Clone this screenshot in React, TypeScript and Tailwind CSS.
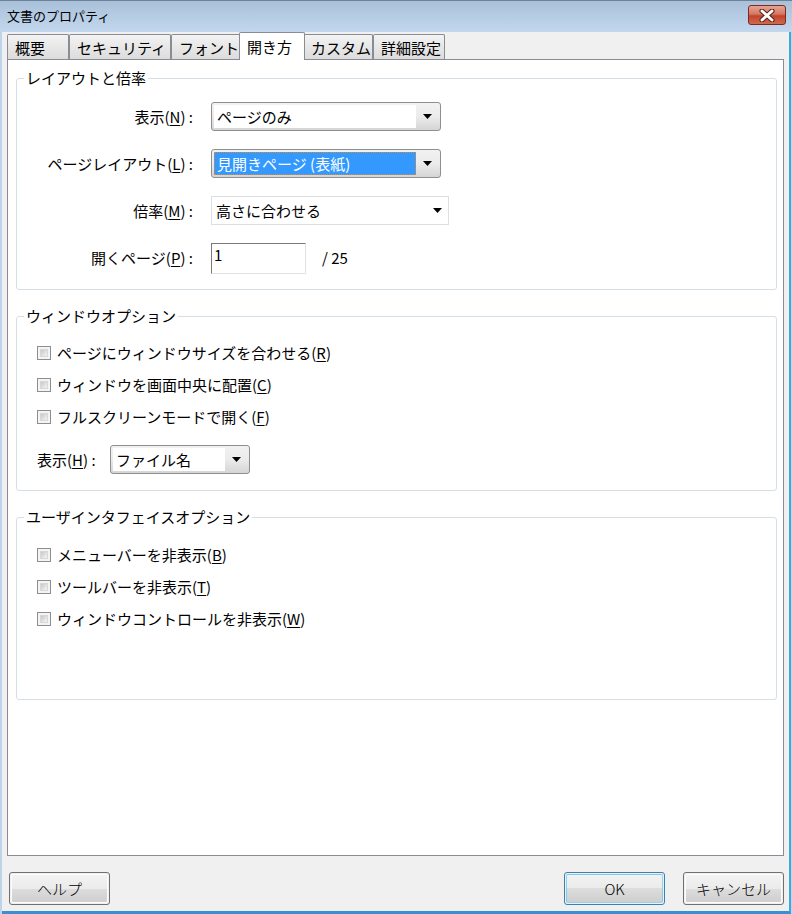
import React from "react";

type TabProps = { label: string; width: string; selected?: boolean };

const Tab = ({ label, width, selected }: TabProps) => {
  if (selected) {
    return (
      <div
        className={`${width} h-[28px] -mb-px -mx-[2px] z-10 flex items-center pl-[7px] bg-white border border-b-0 border-[#898c95] rounded-t-[2px] text-[15px] text-black`}>
        {label}
      </div>
    );
  }
  return (
    <div
      className={`${width} h-[25px] flex items-center pl-[7px] pt-[2px] bg-gradient-to-b from-[#f3f3f3] to-[#dcdcdc] border border-b-0 border-[#898c95] rounded-t-[2px] text-[15px] text-black`}>
      {label}
    </div>
  );
};

const U = ({ c }: { c: string }) => <span className="underline underline-offset-[2px]">{c}</span>;

const Arrow = () => (
  <svg width="9" height="5" viewBox="0 0 9 5">
    <path d="M0 0 H9 L4.5 5 Z" fill="#000" />
  </svg>
);

type ComboProps = {
  value: string;
  width: string;
  variant?: "normal" | "selected" | "flat";
  height?: string;
};

const Combo = ({ value, width, variant = "normal", height = "h-[29px]" }: ComboProps) => {
  if (variant === "flat") {
    return (
      <div
        className={`${width} ${height} flex items-center justify-between bg-white border border-[#dadfe5] pl-[4px] pr-[6px] text-[15px]`}>
        <span>{value}</span>
        <Arrow />
      </div>
    );
  }
  return (
    <div
      className={`${width} ${height} flex bg-gradient-to-b from-[#f2f2f2] via-[#ebebeb] to-[#d5d5d5] border border-[#8e8f8f] rounded-[3px] p-[2px] text-[15px]`}>
      {variant === "selected" ? (
        <div className="flex-1 flex items-center bg-[#3399ff] text-white pl-[3px] outline outline-1 outline-dotted outline-[#e08a2c] -outline-offset-1">
          {value}
        </div>
      ) : (
        <div className="flex-1 flex items-center bg-white pl-[3px]">{value}</div>
      )}
      <div className="w-[22px] flex items-center justify-center">
        <Arrow />
      </div>
    </div>
  );
};

const Check = ({ label, k }: { label: string; k: string }) => (
  <div className="h-[20px] flex items-center gap-[6px]">
    <div className="w-[14px] h-[14px] border border-[#8e8e8e] bg-[#f4f4f4] p-[2px]">
      <div className="w-full h-full bg-gradient-to-br from-[#c8c8c8] to-[#f5f5f5] border border-[#d8d8d8]" />
    </div>
    <span className="text-[15px]">
      {label}(<U c={k} />)
    </span>
  </div>
);

const Group = ({
  title,
  height,
  children,
}: {
  title: string;
  height: string;
  children: React.ReactNode;
}) => (
  <div className={`relative ${height} border border-[#d5dfe5] rounded-[3px]`}>
    <span className="absolute -top-[11px] left-[7px] bg-white px-[2px] text-[15px] leading-[20px]">
      {title}
    </span>
    {children}
  </div>
);

const Button = ({ label, primary }: { label: string; primary?: boolean }) => (
  <div
    className={`w-[101px] h-[33px] rounded-[3px] border ${
      primary ? "border-[#3c7fb1]" : "border-[#707070]"
    } p-px`}>
    <div
      className={`w-full h-full rounded-[2px] border ${
        primary ? "border-[#48c6f5]/60" : "border-[#fcfcfc]"
      } bg-[linear-gradient(to_bottom,#f2f2f2_0%,#ebebeb_50%,#dddddd_50%,#cfcfcf_100%)] flex items-center justify-center text-[15px] font-light text-black`}>
      {label}
    </div>
  </div>
);

export default function App() {
  return (
    <div className="w-[792px] h-[914px] flex flex-col bg-[#bed4ea] font-['Meiryo_UI','Noto_Sans_CJK_JP',sans-serif] text-black leading-[20px] overflow-hidden">
      {/* title bar */}
      <div className="h-[32px] shrink-0 flex items-start justify-between bg-gradient-to-b from-[#a9c0d9] to-[#c3d8ee] border-t border-[#6c8299]">
        <span className="ml-[7px] mt-[5px] text-[13px] text-black">文書のプロパティ</span>
        <div className="mr-[6px] mt-[4px] w-[38px] h-[20px] rounded-[3px] border border-[#7b2a1d] bg-[linear-gradient(to_bottom,#e6a493_0%,#d57863_45%,#c2432c_55%,#cf6a4f_100%)] flex items-center justify-center">
          <svg width="16" height="13" viewBox="0 0 16 13">
            <path d="M3 2 L13 11 M13 2 L3 11" stroke="#5a1f14" strokeWidth="5" strokeLinecap="round" />
            <path d="M3 2 L13 11 M13 2 L3 11" stroke="#fff" strokeWidth="3" strokeLinecap="round" />
          </svg>
        </div>
      </div>

      {/* client */}
      <div className="flex-1 flex flex-col ml-[2px] mr-[1px] bg-[#f0f0f0] border-r-2 border-b-[3px] border-r-[#3ea8dc] border-b-[#3a8fd0]">
        <div className="flex items-end pl-[5px]">
          <Tab label="概要" width="w-[62px]" />
          <Tab label="セキュリティ" width="w-[102px]" />
          <Tab label="フォント" width="w-[70px]" />
          <Tab label="開き方" width="w-[66px]" selected />
          <Tab label="カスタム" width="w-[70px]" />
          <Tab label="詳細設定" width="w-[72px]" />
        </div>

        <div className="ml-[5px] mr-[5px] h-[797px] bg-white border border-[#898c95] flex flex-col gap-[26px] pt-[18px] pl-[8px] pr-[6px]">
          <Group title="レイアウトと倍率" height="h-[212px]">
            <div className="flex flex-col gap-[18px] pt-[23px]">
              <div className="flex items-center h-[29px]">
                <span className="w-[180px] text-right text-[15px] pr-[4px]">
                  表示(<U c="N" />) :
                </span>
                <div className="ml-[14px]">
                  <Combo value="ページのみ" width="w-[230px]" />
                </div>
              </div>
              <div className="flex items-center h-[29px]">
                <span className="w-[180px] text-right text-[15px] pr-[4px]">
                  ページレイアウト(<U c="L" />) :
                </span>
                <div className="ml-[14px]">
                  <Combo value="見開きページ (表紙)" width="w-[230px]" variant="selected" />
                </div>
              </div>
              <div className="flex items-center h-[29px]">
                <span className="w-[180px] text-right text-[15px] pr-[4px]">
                  倍率(<U c="M" />) :
                </span>
                <div className="ml-[14px]">
                  <Combo value="高さに合わせる" width="w-[238px]" variant="flat" />
                </div>
              </div>
              <div className="flex items-center h-[29px]">
                <span className="w-[180px] text-right text-[15px] pr-[4px]">
                  開くページ(<U c="P" />) :
                </span>
                <div className="ml-[14px] w-[95px] h-[31px] mt-[2px] bg-white border border-t-[#7a7a7a] border-l-[#7a7a7a] border-r-[#dfe3e8] border-b-[#dfe3e8] pl-[2px] text-[15px] leading-[22px]">
                  1
                </div>
                <span className="ml-[16px] text-[15px]">/ 25</span>
              </div>
            </div>
          </Group>

          <Group title="ウィンドウオプション" height="h-[175px]">
            <div className="flex flex-col gap-[12px] pt-[26px] pl-[20px]">
              <Check label="ページにウィンドウサイズを合わせる" k="R" />
              <Check label="ウィンドウを画面中央に配置" k="C" />
              <Check label="フルスクリーンモードで開く" k="F" />
              <div className="flex items-center mt-[6px]">
                <span className="w-[73px] text-[15px]">
                  表示(<U c="H" />) :
                </span>
                <Combo value="ファイル名" width="w-[140px]" height="h-[29px]" />
              </div>
            </div>
          </Group>

          <Group title="ユーザインタフェイスオプション" height="h-[183px]">
            <div className="flex flex-col gap-[12px] pt-[27px] pl-[20px]">
              <Check label="メニューバーを非表示" k="B" />
              <Check label="ツールバーを非表示" k="T" />
              <Check label="ウィンドウコントロールを非表示" k="W" />
            </div>
          </Group>
        </div>

        <div className="flex items-center justify-between pl-[7px] pr-[5px] pt-[16px]">
          <Button label="ヘルプ" />
          <div className="flex gap-[18px]">
            <Button label="OK" primary />
            <Button label="キャンセル" />
          </div>
        </div>
      </div>
    </div>
  );
}
